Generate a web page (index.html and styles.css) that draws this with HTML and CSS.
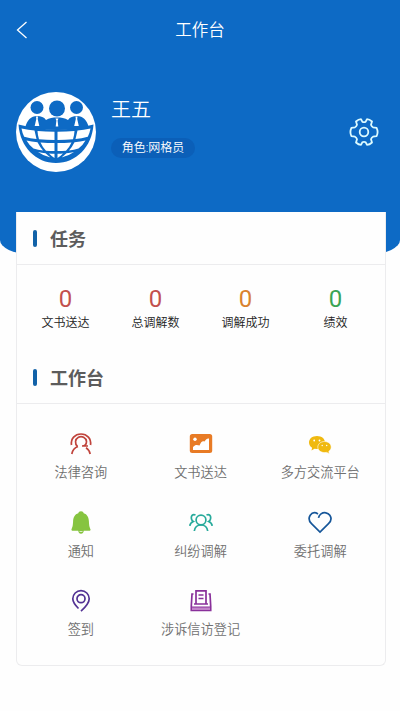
FILE: index.html
```html
<!DOCTYPE html>
<html lang="zh-CN">
<head>
<meta charset="utf-8">
<meta name="viewport" content="width=device-width, initial-scale=1">
<title>工作台</title>
<link rel="stylesheet" href="styles.css">
</head>
<body>
<header class="hero">
  <nav class="navbar">
    <svg class="back" viewBox="0 0 12 18"><path d="M10.500 1 1.500 9l9 8"/></svg>
    <h1 class="title">工作台</h1>
  </nav>
  <section class="profile">
    <svg class="avatar" viewBox="0 0 80 80">
      <circle cx="40" cy="40" r="40" fill="#fff"/>
      <g fill="#0d6ac5">
        <circle cx="21" cy="15.500" r="6.500"/><circle cx="60.500" cy="15.500" r="6.500"/><circle cx="41" cy="16.500" r="8"/>
        <path d="M9 36c2-8 6-12 12-12 4 0 7 1 9 4 3-2 7-2.500 11-2.500s8 .5 11 2.500c2-3 5-4 9-4 6 0 10 4 12 12q-31 4-64 0z"/>
        <path d="M2.500 32.500q38 10 75 0C76 55 60 71 40 71S4 55 2.500 32.500z"/>
      </g>
      <path d="M20 24.500h2l-.3 2.500 1.600 7h-4.600l1.600-7zM59.500 24.500h2l-.3 2.500 1.600 7h-4.600l1.600-7zM39.500 26.500h3l-.9 2 .7 6h-2.600l.7-6z" fill="#fff"/>
      <g fill="#fff">
        <path d="M5.500 36.500q7 1.500 13 2l2 8.500q-6-.5-12.300-2.200-2-4-2.700-8.300z"/>
        <path d="M21.500 39q8 .8 17 .8V48q-8 0-15.500-.7-1.300-4-1.500-8.300z"/>
        <path d="M41.500 39.800q9 0 17-.8-.2 4.300-1.500 8.300-7.500.7-15.500.7z"/>
        <path d="M61.500 38.500q6-.5 13-2-.7 4.300-2.700 8.300-6.300 1.700-12.300 2.200z"/>
        <path d="M10.500 48.500q5 1.400 11 1.700 2.500 5 5.500 8.300-5-.5-9.500-2-4.500-3.500-7-8z"/>
        <path d="M24.500 50.500q7 .6 14 .6v8q-5 0-8.500-.4-3.500-3.700-5.500-8.200z"/>
        <path d="M41.500 51.100q7 0 14-.6-2 4.500-5.500 8.200-3.500.4-8.500.4z"/>
        <path d="M58.500 50.200q6-.3 11-1.700-2.500 4.500-7 8-4.500 1.500-9.500 2 3-3.300 5.500-8.300z"/>
        <path d="M22 60q4 1 7.500 1.200 2.500 2.300 5 4.300-7-1.500-12.500-5.500zM33 61.500q2.500.3 5.500.3V66q-3-1.800-5.500-4.500zM41.500 61.800q3 0 5.500-.3-2.500 2.700-5.500 4.500zM50.500 61.200Q54 61 58 60q-5.500 4-12.500 5.500 2.500-2 5-4.300z"/>
      </g>
    </svg>
    <div class="identity">
      <div class="name">王五</div>
      <div class="role">角色:网格员</div>
    </div>
    <svg class="gear" viewBox="0 0 30 30"><path d="M12 2.200 13.300 4.700Q15 5.700 16.700 4.700L18 2.200Q20.500 2.200 23 4.500L22 7.800Q22.500 9.600 24 10.300L27.600 10.800Q29.600 15 27.600 19.200L24 19.700Q22.500 20.400 22 22.200L23 25.500Q20.500 27.800 18 27.800L16.700 25.300Q15 24.300 13.300 25.300L12 27.800Q9.500 27.800 7 25.500L8 22.200Q7.500 20.400 6 19.700L2.400 19.200Q.4 15 2.400 10.800L6 10.300Q7.500 9.600 8 7.800L7 4.500Q9.500 2.200 12 2.200z"/><circle cx="15" cy="15" r="4.300"/></svg>
  </section>
</header>
<main class="card">
  <h2 class="section-title">任务</h2>
  <div class="stats">
    <div class="stat red"><b>0</b><span>文书送达</span></div>
    <div class="stat red"><b>0</b><span>总调解数</span></div>
    <div class="stat orange"><b>0</b><span>调解成功</span></div>
    <div class="stat green"><b>0</b><span>绩效</span></div>
  </div>
  <h2 class="section-title">工作台</h2>
  <div class="tools">
    <div class="tool">
      <svg viewBox="0 0 24 24" stroke="#c0443c"><path d="M2.500 13C1.500 6.500 6 2 12 2s10.500 4.500 9.500 11"/><path d="M8.500 14.300A5.500 5.500 0 1 1 17.500 9.500c0 3-1.500 4.500-4.500 4.500h6M2.800 22c.7-4 3-6.500 6.200-7.500M21.200 22c-.7-3-2-5-4.200-6.300"/></svg>
      <span>法律咨询</span>
    </div>
    <div class="tool">
      <svg viewBox="0 0 24 24"><rect x=".8" y="2" width="22.400" height="19" rx="2.500" fill="#e87b25"/><circle cx="6" cy="7.200" r="1.700" fill="#fff"/><path d="M4 18v-3c2-2.500 4-2.500 6.500-1.500 1.500-4 3-5 5-4 1.500-2.500 3-3.500 4.500-3V18z" fill="#fff"/></svg>
      <span>文书送达</span>
    </div>
    <div class="tool">
      <svg viewBox="0 0 24 24"><path d="M9 4c4.700 0 8 2.800 8 6.500S13.700 17 9 17l-2.500-.3-3 1.800.6-2.800C2.200 14.500 1 12.700 1 10.500 1 6.800 4.300 4 9 4z" fill="#f0b90f"/><path d="M16.500 9.500c3.800 0 6.700 2.400 6.700 5.600 0 1.900-1 3.300-2.400 4.300l.5 2.300-2.600-1.300-2.200.2c-3.800 0-6.700-2.400-6.700-5.500s2.900-5.600 6.700-5.600z" fill="#f0b90f" stroke="#fff" stroke-width=".6"/><g fill="#fff"><circle cx="6.200" cy="8.500" r=".9"/><circle cx="11.500" cy="8.500" r=".9"/><circle cx="14.200" cy="13.500" r=".7"/><circle cx="18.700" cy="13.500" r=".7"/></g></svg>
      <span>多方交流平台</span>
    </div>
    <div class="tool">
      <svg viewBox="0 0 24 24"><path d="M12 .3c1.500 0 2.500.8 2.700 2 3.500 1 5 4 5.200 8 .2 4.500.6 6 1.700 8.200l-.5 1.200h-6.300c-.3 1.900-1.200 3-2.800 3s-2.500-1.100-2.800-3H2.900l-.5-1.200c1.100-2.200 1.500-3.700 1.700-8.200.2-4 1.700-7 5.200-8 .2-1.200 1.200-2 2.700-2z" fill="#86c440"/><path d="M10.500 20.500h3" stroke="#fff" stroke-width=".7"/></svg>
      <span>通知</span>
    </div>
    <div class="tool">
      <svg viewBox="0 0 24 24" stroke="#27aa9b"><circle cx="12" cy="9" r="4.900"/><path d="M5.300 20c.5-3.500 2.900-6 6.700-6s6.200 2.500 6.700 6M6.500 4C3.500 2.700 1.800 5 2.500 8c.3 1.300 1 2 1.800 2.500C2 11.500 1 12.800.8 14.800M17.500 4c3-1.300 4.700 1 4 4-.3 1.300-1 2-1.800 2.500 2.300 1 3.300 2.300 3.500 4.300"/></svg>
      <span>纠纷调解</span>
    </div>
    <div class="tool">
      <svg viewBox="0 0 24 24" stroke="#165699"><path d="M10.500 6.800c.3-1.600 1.200-3 2.500-3.900 3-2 7-1.400 8.800 1.300 1.900 2.900 1.200 6.200-1.300 8.500L12 21l-8.500-8.300C1 10.200.5 7 2.200 4.200c1.900-2.600 5-3 7.800-1.200"/></svg>
      <span>委托调解</span>
    </div>
    <div class="tool">
      <svg viewBox="0 0 24 24" stroke="#533294"><path d="M9.500 19.500C6 16 3.800 13.300 3.800 9.800A8.200 8.200 0 0 1 20.200 9.800c0 4.600-4 8.600-8.200 12.400"/><circle cx="12" cy="9.700" r="4"/></svg>
      <span>签到</span>
    </div>
    <div class="tool">
      <svg viewBox="0 0 24 24" stroke="#89309a"><path d="M4.500 5H3L2.300 17v4.500h19.400V17L21 5h-1.500M5 15h14M7 15V1.800h10V15M9.500 6h5M9.500 9.500h5"/><path d="M2.500 18h19v3.500h-19z" fill="#c283ca" stroke-width="1"/></svg>
      <span>涉诉信访登记</span>
    </div>
  </div>
</main>
</body>
</html>
```
FILE: styles.css
```css
* { box-sizing: border-box; }
body {
  margin: 0;
  min-height: 711px;
  background: #fefefe;
  font-family: Roboto, "Noto Sans CJK SC", sans-serif;
}
svg { display: block; fill: none; }
.hero {
  height: 254px;
  background: #0d6ac5;
  border-radius: 0 0 30px 30px / 0 0 14px 14px;
  color: #fff;
}
.navbar {
  display: grid;
  grid-template-columns: 40px 1fr 40px;
  align-items: center;
  height: 60px;
}
.back {
  width: 12px;
  height: 18px;
  margin-left: 16px;
  stroke: #fff;
  stroke-width: 1.3;
}
.title {
  margin: 0;
  padding-top: 2px;
  font-size: 16.5px;
  font-weight: 350;
  line-height: 24px;
  text-align: center;
}
.profile {
  display: flex;
  align-items: center;
  padding: 32px 21px 0 16px;
}
.avatar { width: 80px; height: 80px; }
.identity {
  flex: 1;
  display: flex;
  flex-direction: column;
  align-items: flex-start;
  gap: 14px;
  padding: 0 0 11px 15px;
}
.name { font-size: 20px; font-weight: 350; line-height: 28px; }
.role {
  width: 84px;
  height: 20px;
  border-radius: 10px;
  background: #0b5fb8;
  font-size: 12px;
  font-weight: 350;
  line-height: 21px;
  text-align: center;
}
.gear {
  width: 30px;
  height: 30px;
  stroke: #dcfbff;
  stroke-width: 1.8;
  stroke-linejoin: round;
}
.card {
  position: relative;
  width: 370px;
  height: 454px;
  margin: -42px 0 0 16px;
  border: 1px solid #ececee;
  border-top: 0;
  border-radius: 0 0 6px 6px;
  background: #fefefe;
}
.section-title {
  display: flex;
  align-items: center;
  gap: 13px;
  height: 53px;
  margin: 0;
  padding: 3px 0 0 16px;
  border-bottom: 1px solid #ececee;
  color: #5c5c5c;
  font-size: 18px;
  font-weight: 700;
  line-height: 27px;
}
.section-title::before {
  content: "";
  width: 4px;
  height: 17px;
  margin-bottom: 3px;
  border-radius: 2px;
  background: #1262a8;
}
.stats {
  display: grid;
  grid-template-columns: repeat(4, 90px);
  height: 86px;
  padding: 20px 0 0 3.5px;
}
.stat {
  display: flex;
  flex-direction: column;
  align-items: center;
}
.stat b { font-size: 24px; font-weight: 400; line-height: 28px; }
.stat span { color: #222; font-size: 12px; font-weight: 350; line-height: 21px; }
.red b { color: #c2504d; }
.orange b { color: #d9822f; }
.green b { color: #3ba454; }
.tools {
  display: grid;
  grid-template-columns: repeat(3, 119.7px);
  grid-auto-rows: 78.6px;
  padding: 28px 0 0 4px;
}
.tool {
  display: flex;
  flex-direction: column;
  align-items: center;
  gap: 6px;
}
.tool svg { width: 24px; height: 24px; stroke-width: 1.7; }
.tool span {
  color: #707070;
  font-size: 13.2px;
  font-weight: 350;
  line-height: 21px;
  white-space: nowrap;
}
```
